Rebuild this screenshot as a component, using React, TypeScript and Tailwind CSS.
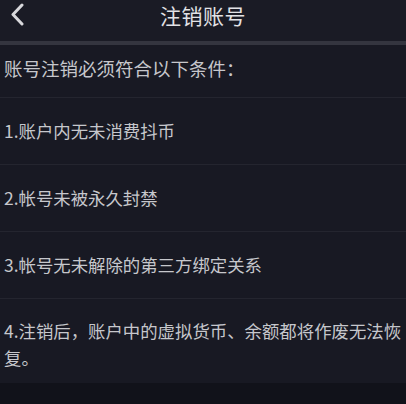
const ITEMS = [
  '1.账户内无未消费抖币',
  '2.帐号未被永久封禁',
  '3.帐号无未解除的第三方绑定关系',
]

export default function App() {
  return (
    <div
      className="min-h-screen bg-[#11121a] text-[#c6c7cc]"
      style={{ fontFamily: '"Noto Sans CJK SC", "Noto Sans", sans-serif' }}
    >
      {/* 顶部导航 */}
      <div className="relative h-[41px] bg-[#1a1b25] flex justify-center">
        <svg
          className="absolute left-[10px] top-[3px]"
          width="14"
          height="23"
          viewBox="0 0 14 23"
          fill="none"
        >
          <path d="M12 2 L3 11.5 L12 21" stroke="#d8d8dc" strokeWidth="3" strokeLinecap="round" strokeLinejoin="round" />
        </svg>
        <h1 className="pt-[1px] text-[21px] leading-[28px] text-[#e2e2e6] tracking-[0.5px]">注销账号</h1>
      </div>
      <div className="h-[4px] bg-[#34353f]" />

      {/* 条件列表 */}
      <div className="bg-[#181923]">
        <div className="pl-[4px] pt-[9px] h-[52px] text-[18.5px] leading-[28px]">账号注销必须符合以下条件：</div>
        {ITEMS.map(text => (
          <div key={text} className="border-t border-[#24252f] pl-[4px] py-[20px] text-[17.4px] leading-[26px]">
            {text}
          </div>
        ))}
        <div className="border-t border-[#24252f] pl-[4px] pt-[18px] pb-[12px] text-[17.4px] leading-[27px]">
          4.注销后，账户中的虚拟货币、余额都将作废无法恢复。
        </div>
      </div>
    </div>
  )
}
